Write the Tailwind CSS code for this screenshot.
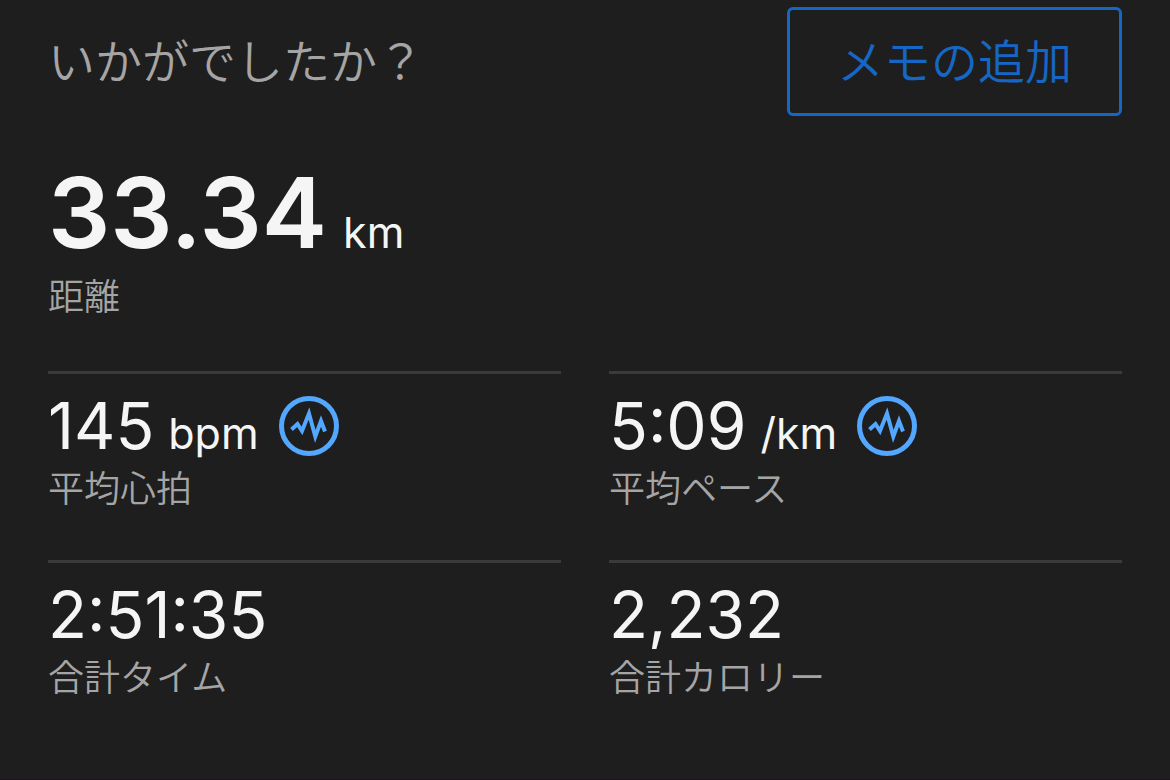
<!DOCTYPE html>
<html lang="ja">
<head>
    <meta charset="UTF-8">
    <meta name="viewport" content="width=device-width, initial-scale=1.0">
    <title>ランニング</title>
    <script src="https://cdn.jsdelivr.net/npm/@tailwindcss/browser@4"></script>
</head>
<body class="min-h-screen flex flex-col bg-[#1e1e1e] text-[#f5f5f5] font-['Inter','Noto_Sans_CJK_JP',sans-serif]">

    <main class="flex-1 px-12 pt-[7px]">
        <!-- Notes prompt -->
        <div class="flex items-center justify-between">
            <h1 class="text-[47px] leading-none font-[350] text-[#a5a5a5]">いかがでしたか？</h1>
            <button type="button" class="border-3 border-[#1667c5] rounded-md px-[47px] py-7 text-[47px] leading-none font-[350] text-[#1667c5]">メモの追加</button>
        </div>

        <!-- Distance -->
        <div class="mt-12">
            <p class="flex items-baseline gap-4">
                <span class="text-[98px] leading-none font-semibold">33.34</span>
                <span class="text-[43px] leading-none">km</span>
            </p>
            <p class="mt-2 text-4xl leading-[54px] font-[350] text-[#a5a5a5]">距離</p>
        </div>

        <!-- Stats -->
        <div class="mt-[47px] grid grid-cols-2 gap-x-12">
            <div class="h-[189px] border-t-3 border-[#3a3a3a] pt-5">
                <div class="flex items-center gap-5">
                    <p class="flex items-baseline gap-3.5">
                        <span class="text-[64px] leading-none">145</span>
                        <span class="text-[43px] leading-none">bpm</span>
                    </p>
                    <svg class="size-[60px]" viewBox="0 0 60 60" fill="none" stroke="#53a7ff">
                        <circle cx="30" cy="30" r="27.5" stroke-width="5"/>
                        <path d="M12.5 33.5L18.5 28L23 35L30 17.5L36.3 40.5L42 25L46 35.5" stroke-width="4" stroke-miterlimit="10"/>
                    </svg>
                </div>
                <p class="mt-1 text-4xl leading-[54px] font-[350] text-[#a5a5a5]">平均心拍</p>
            </div>
            <div class="h-[189px] border-t-3 border-[#3a3a3a] pt-5">
                <div class="flex items-center gap-5">
                    <p class="flex items-baseline gap-3.5">
                        <span class="text-[64px] leading-none">5:09</span>
                        <span class="text-[43px] leading-none">/km</span>
                    </p>
                    <svg class="size-[60px]" viewBox="0 0 60 60" fill="none" stroke="#53a7ff">
                        <circle cx="30" cy="30" r="27.5" stroke-width="5"/>
                        <path d="M12.5 33.5L18.5 28L23 35L30 17.5L36.3 40.5L42 25L46 35.5" stroke-width="4" stroke-miterlimit="10"/>
                    </svg>
                </div>
                <p class="mt-1 text-4xl leading-[54px] font-[350] text-[#a5a5a5]">平均ペース</p>
            </div>
            <div class="h-[189px] border-t-3 border-[#3a3a3a] pt-5">
                <p class="text-[64px] leading-none">2:51:35</p>
                <p class="mt-1 text-4xl leading-[54px] font-[350] text-[#a5a5a5]">合計タイム</p>
            </div>
            <div class="h-[189px] border-t-3 border-[#3a3a3a] pt-5">
                <p class="text-[64px] leading-none">2,232</p>
                <p class="mt-1 text-4xl leading-[54px] font-[350] text-[#a5a5a5]">合計カロリー</p>
            </div>
        </div>
    </main>

    <footer class="h-px bg-[#1a151a]"></footer>

</body>
</html>
